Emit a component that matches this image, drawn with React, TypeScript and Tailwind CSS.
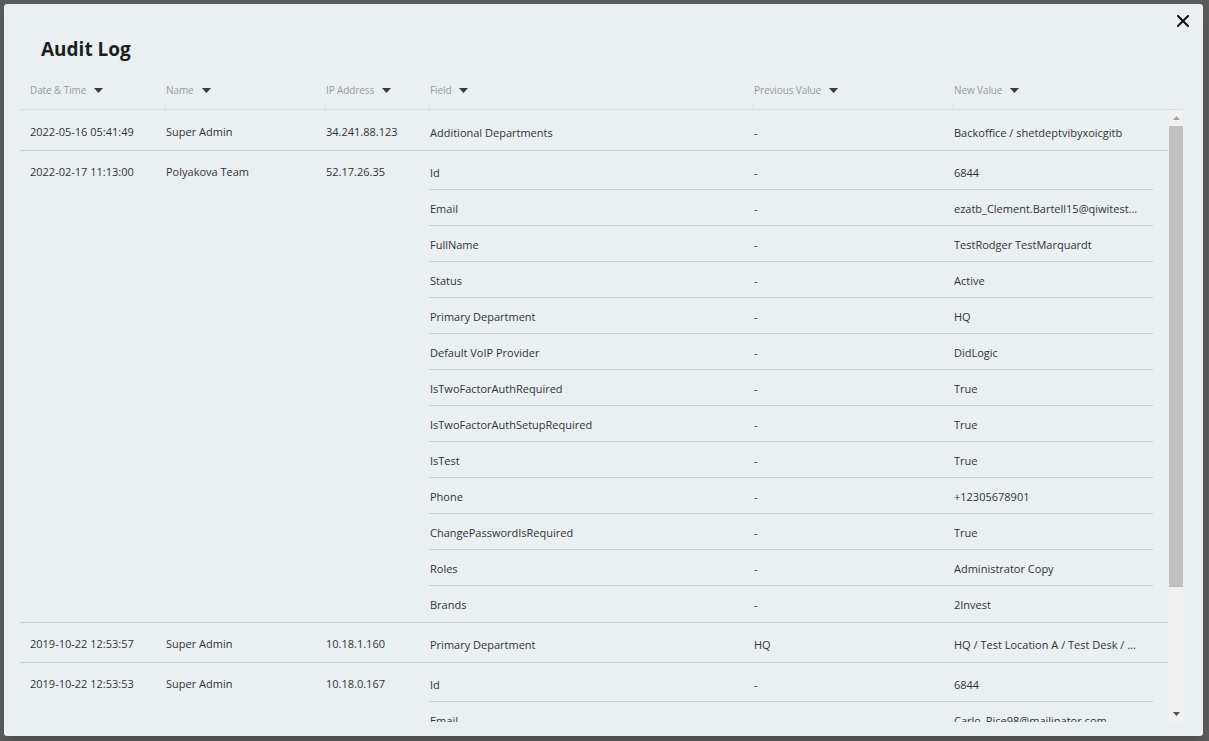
import React from 'react';

type Change = { field: string; prev: string; next: string };
type Entry = { date: string; name: string; ip: string; changes: Change[] };

const entries: Entry[] = [
  {
    date: '2022-05-16 05:41:49',
    name: 'Super Admin',
    ip: '34.241.88.123',
    changes: [{ field: 'Additional Departments', prev: '-', next: 'Backoffice / shetdeptvibyxoicgitb' }],
  },
  {
    date: '2022-02-17 11:13:00',
    name: 'Polyakova Team',
    ip: '52.17.26.35',
    changes: [
      { field: 'Id', prev: '-', next: '6844' },
      { field: 'Email', prev: '-', next: 'ezatb_Clement.Bartell15@qiwitest...' },
      { field: 'FullName', prev: '-', next: 'TestRodger TestMarquardt' },
      { field: 'Status', prev: '-', next: 'Active' },
      { field: 'Primary Department', prev: '-', next: 'HQ' },
      { field: 'Default VoIP Provider', prev: '-', next: 'DidLogic' },
      { field: 'IsTwoFactorAuthRequired', prev: '-', next: 'True' },
      { field: 'IsTwoFactorAuthSetupRequired', prev: '-', next: 'True' },
      { field: 'IsTest', prev: '-', next: 'True' },
      { field: 'Phone', prev: '-', next: '+12305678901' },
      { field: 'ChangePasswordIsRequired', prev: '-', next: 'True' },
      { field: 'Roles', prev: '-', next: 'Administrator Copy' },
      { field: 'Brands', prev: '-', next: '2Invest' },
    ],
  },
  {
    date: '2019-10-22 12:53:57',
    name: 'Super Admin',
    ip: '10.18.1.160',
    changes: [{ field: 'Primary Department', prev: 'HQ', next: 'HQ / Test Location A / Test Desk / ...' }],
  },
  {
    date: '2019-10-22 12:53:53',
    name: 'Super Admin',
    ip: '10.18.0.167',
    changes: [
      { field: 'Id', prev: '-', next: '6844' },
      { field: 'Email', prev: '-', next: 'Carlo_Rice98@mailinator.com' },
      { field: 'FullName', prev: '-', next: 'TestRodger TestMarquardt' },
    ],
  },
];

function SortArrow() {
  return (
    <svg width="9" height="5" viewBox="0 0 9 5" className="ml-[8px] shrink-0">
      <path d="M0 0 L9 0 L4.5 5 Z" fill="#3a3a3a" />
    </svg>
  );
}

function HeaderCell({ label, className, first }: { label: string; className: string; first?: boolean }) {
  return (
    <div className={`${className} flex flex-col`}>
      <div className={`flex items-center h-[14px] ${first ? 'pl-[10px]' : 'pl-[1px]'}`}>
        <span className="text-[10px] text-[#999c9e] tracking-[-0.1px]">{label}</span>
        <SortArrow />
      </div>
      <div className={`mt-[5px] h-[7px] ${first ? '' : 'border-l border-[#dbe1e5]'}`} />
    </div>
  );
}

function Scrollbar() {
  return (
    <div className="w-[14px] shrink-0 bg-[#f1f1f1] flex flex-col">
      <div className="h-[16px] flex items-center justify-center">
        <svg width="7" height="4" viewBox="0 0 7 4">
          <path d="M0 4 L7 4 L3.5 0 Z" fill="#a3a3a3" />
        </svg>
      </div>
      <div className="h-[461px] bg-[#c1c1c1]" />
      <div className="flex-1" />
      <div className="h-[16px] flex items-center justify-center">
        <svg width="7" height="4" viewBox="0 0 7 4">
          <path d="M0 0 L7 0 L3.5 4 Z" fill="#505050" />
        </svg>
      </div>
    </div>
  );
}

export default function App() {
  return (
    <div
      className="w-[1209px] h-[741px] bg-[#5b5b5b] pl-[4px] pt-[4px] overflow-hidden"
      style={{ fontFamily: '"Open Sans", "Noto Sans", sans-serif' }}
    >
      <div className="relative w-[1199px] h-[732px] bg-[#eaeff2] rounded-[3px] flex flex-col pl-[16px] pr-[20px] pb-[14px] shadow-lg">
        {/* Close */}
        <button className="absolute right-[14px] top-[11px] w-[12px] h-[12px] flex items-center justify-center">
          <svg width="12" height="12" viewBox="0 0 12 12">
            <path d="M1 1 L11 11 M11 1 L1 11" stroke="#111" strokeWidth="2" strokeLinecap="square" />
          </svg>
        </button>

        {/* Title */}
        <h2 className="pt-[32px] pl-[21px] h-[58px] text-[19px] leading-[26px] font-bold text-[#1e1e1e]">
          Audit Log
        </h2>

        {/* Header */}
        <div className="mt-[21px] flex border-b border-[#d9dfe3]">
          <HeaderCell label="Date & Time" className="w-[145px]" first />
          <HeaderCell label="Name" className="w-[160px]" />
          <HeaderCell label="IP Address" className="w-[104px]" />
          <HeaderCell label="Field" className="w-[324px]" />
          <HeaderCell label="Previous Value" className="w-[200px]" />
          <HeaderCell label="New Value" className="flex-1" />
        </div>

        {/* Body */}
        <div className="flex-1 min-h-0 flex">
          <div className="flex-1 overflow-hidden pr-[1px] pt-[1px]">
            {entries.map((e, i) => (
              <div key={i} className="flex border-b border-[#c9ced1] pt-[3px] pb-[1px] text-[11px] leading-[14px] text-[#333]">
                <div className="w-[145px] pl-[10px] pt-[11px]">{e.date}</div>
                <div className="w-[160px] pl-[1px] pt-[11px]">{e.name}</div>
                <div className="w-[104px] pl-[1px] pt-[11px]">{e.ip}</div>
                <div className="flex-1 mr-[15px]">
                  {e.changes.map((c, j) => {
                    const last = j === e.changes.length - 1;
                    return (
                      <div
                        key={j}
                        className={`flex pt-[12px] ${last ? 'h-[35px]' : 'h-[36px] border-b border-[#c9ced1]'}`}
                      >
                        <div className="w-[324px] pl-[1px] truncate">{c.field}</div>
                        <div className="w-[200px] pl-[1px] truncate">{c.prev}</div>
                        <div className="flex-1 pl-[1px] pr-[10px] truncate">{c.next}</div>
                      </div>
                    );
                  })}
                </div>
              </div>
            ))}
          </div>
          <Scrollbar />
        </div>
      </div>
    </div>
  );
}
